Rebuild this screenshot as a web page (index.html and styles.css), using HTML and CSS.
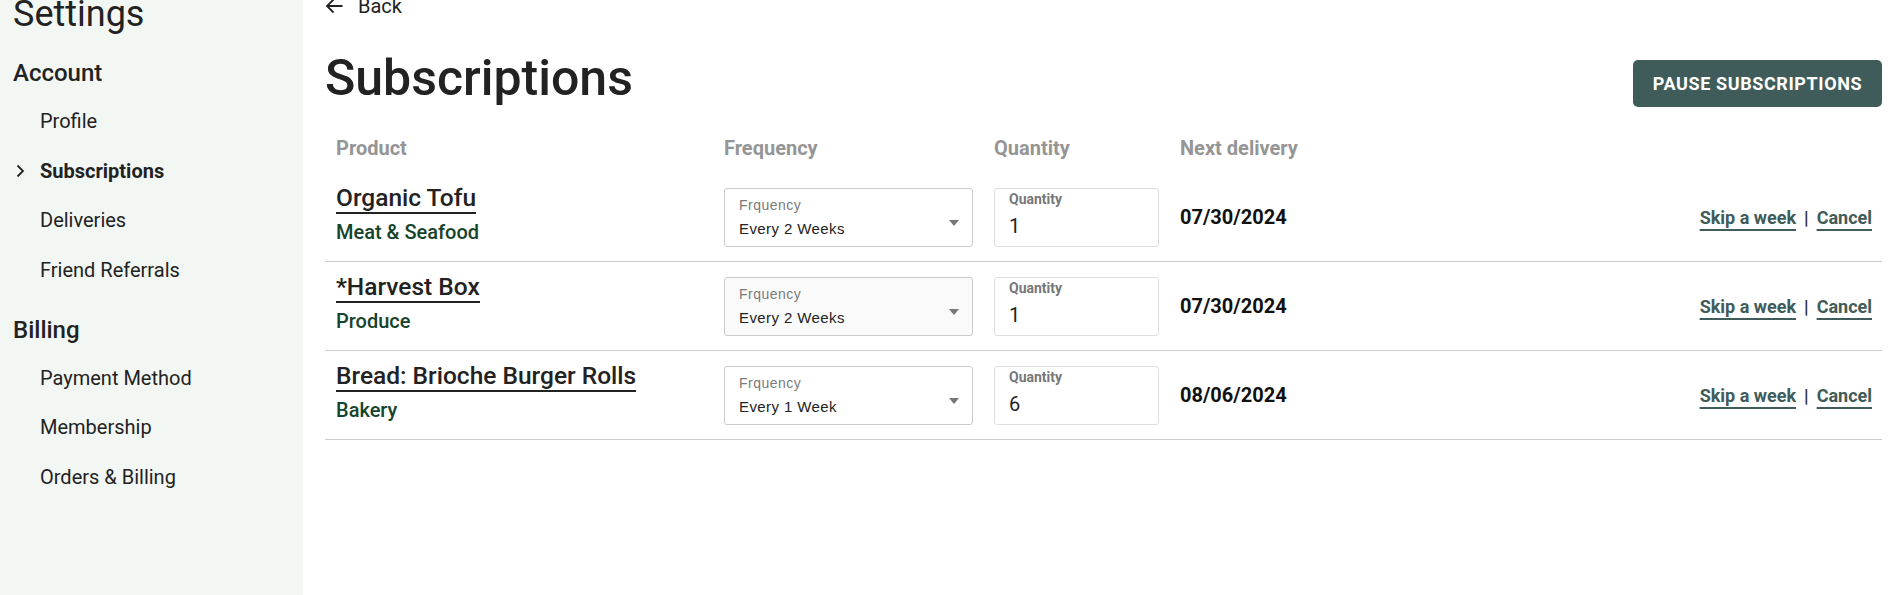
FILE: index.html
```html
<!DOCTYPE html>
<html lang="en">
<head>
<meta charset="utf-8">
<title>Subscriptions</title>
<link rel="stylesheet" href="styles.css">
</head>
<body>
<div class="layout">
  <aside class="sidebar">
    <h1 class="sidebar-title">Settings</h1>
    <section class="nav-section">
      <h2 class="nav-heading">Account</h2>
      <ul class="nav-list">
        <li class="nav-item"><span class="nav-marker"></span><a class="nav-link" href="#">Profile</a></li>
        <li class="nav-item is-active"><span class="nav-marker"><svg width="9" height="14" viewBox="0 0 9 14"><polyline points="1.5,1.5 7,7 1.5,12.5" fill="none" stroke="#222" stroke-width="1.8"/></svg></span><a class="nav-link" href="#">Subscriptions</a></li>
        <li class="nav-item"><span class="nav-marker"></span><a class="nav-link" href="#">Deliveries</a></li>
        <li class="nav-item"><span class="nav-marker"></span><a class="nav-link" href="#">Friend Referrals</a></li>
      </ul>
    </section>
    <section class="nav-section">
      <h2 class="nav-heading">Billing</h2>
      <ul class="nav-list">
        <li class="nav-item"><span class="nav-marker"></span><a class="nav-link" href="#">Payment Method</a></li>
        <li class="nav-item"><span class="nav-marker"></span><a class="nav-link" href="#">Membership</a></li>
        <li class="nav-item"><span class="nav-marker"></span><a class="nav-link" href="#">Orders &amp; Billing</a></li>
      </ul>
    </section>
  </aside>

  <main class="content">
    <a class="back-link" href="#">
      <svg width="18" height="16" viewBox="0 0 18 16"><path d="M17.5 8H2.2M8.5 1.5L2 8l6.5 6.5" fill="none" stroke="#222" stroke-width="1.8"/></svg>
      <span>Back</span>
    </a>

    <div class="title-row">
      <h1 class="page-title">Subscriptions</h1>
      <button class="pause-btn" type="button">Pause Subscriptions</button>
    </div>

    <div class="sub-table">
      <div class="sub-head">
        <div>Product</div>
        <div>Frequency</div>
        <div>Quantity</div>
        <div>Next delivery</div>
        <div></div>
      </div>

      <div class="sub-row">
        <div class="product">
          <a class="product-name" href="#">Organic Tofu</a>
          <span class="product-cat">Meat &amp; Seafood</span>
        </div>
        <div class="select">
          <div class="select-text">
            <span class="select-label">Frquency</span>
            <span class="select-value">Every 2 Weeks</span>
          </div>
          <span class="select-caret"></span>
        </div>
        <div class="qty">
          <span class="qty-label">Quantity</span>
          <span class="qty-value">1</span>
        </div>
        <div class="date">07/30/2024</div>
        <div class="actions"><a class="action-link" href="#">Skip a week</a><span class="action-sep">|</span><a class="action-link" href="#">Cancel</a></div>
      </div>

      <div class="sub-row">
        <div class="product">
          <a class="product-name" href="#">*Harvest Box</a>
          <span class="product-cat">Produce</span>
        </div>
        <div class="select is-hover">
          <div class="select-text">
            <span class="select-label">Frquency</span>
            <span class="select-value">Every 2 Weeks</span>
          </div>
          <span class="select-caret"></span>
        </div>
        <div class="qty">
          <span class="qty-label">Quantity</span>
          <span class="qty-value">1</span>
        </div>
        <div class="date">07/30/2024</div>
        <div class="actions"><a class="action-link" href="#">Skip a week</a><span class="action-sep">|</span><a class="action-link" href="#">Cancel</a></div>
      </div>

      <div class="sub-row">
        <div class="product">
          <a class="product-name" href="#">Bread: Brioche Burger Rolls</a>
          <span class="product-cat">Bakery</span>
        </div>
        <div class="select">
          <div class="select-text">
            <span class="select-label">Frquency</span>
            <span class="select-value">Every 1 Week</span>
          </div>
          <span class="select-caret"></span>
        </div>
        <div class="qty">
          <span class="qty-label">Quantity</span>
          <span class="qty-value">6</span>
        </div>
        <div class="date">08/06/2024</div>
        <div class="actions"><a class="action-link" href="#">Skip a week</a><span class="action-sep">|</span><a class="action-link" href="#">Cancel</a></div>
      </div>
    </div>
  </main>
</div>
</body>
</html>
```

FILE: styles.css
```css
* { box-sizing: border-box; }

html, body {
  margin: 0;
  padding: 0;
  background: #ffffff;
}

body {
  font-family: Roboto, "Noto Sans", Arial, sans-serif;
  color: #222222;
}

a { color: inherit; text-decoration: none; }

.layout {
  display: flex;
  min-height: 100vh;
}

/* ---------- Sidebar ---------- */
.sidebar {
  width: 303px;
  flex: 0 0 303px;
  background: #f3f7f4;
  padding-left: 13px;
}

.sidebar-title {
  margin: -7px 0 0 0;
  font-size: 36px;
  line-height: 42px;
  font-weight: 400;
  color: #222;
}

.nav-section { margin-top: 24px; }
.nav-section + .nav-section { margin-top: 34px; }

.nav-heading {
  margin: 0;
  font-size: 24px;
  line-height: 28px;
  font-weight: 500;
  color: #222;
}

.nav-list {
  list-style: none;
  margin: 22px 0 0 0;
  padding: 0;
  display: flex;
  flex-direction: column;
  gap: 25.5px;
}

.nav-item {
  display: flex;
  align-items: center;
  height: 24px;
}

.nav-marker {
  width: 27px;
  flex: 0 0 27px;
  display: flex;
  align-items: center;
  padding-left: 3px;
}

.nav-link {
  font-size: 20px;
  line-height: 24px;
  color: #222;
}

.nav-item.is-active .nav-link { font-weight: 700; }

/* ---------- Main ---------- */
.content {
  flex: 1;
  padding: 0 19px 0 22px;
}

.back-link {
  margin-top: -6px;
  display: flex;
  align-items: center;
  gap: 15px;
  height: 24px;
  font-size: 20px;
  line-height: 24px;
  color: #222;
}

.title-row {
  margin-top: 30px;
  display: flex;
  justify-content: space-between;
  align-items: flex-start;
}

.page-title {
  margin: 0;
  font-size: 50px;
  line-height: 60px;
  font-weight: 500;
  color: #222;
}

.pause-btn {
  margin-top: 12px;
  width: 249px;
  height: 47px;
  border: none;
  border-radius: 5px;
  background: #3f5c5a;
  color: #ffffff;
  font-family: Roboto, Arial, sans-serif;
  font-size: 18px;
  font-weight: 700;
  letter-spacing: 0.6px;
  text-transform: uppercase;
}

/* ---------- Table ---------- */
.sub-table { margin-top: 28px; }

.sub-head,
.sub-row {
  display: grid;
  grid-template-columns: 388px 270px 186px 1fr auto;
  padding: 0 10px 0 11px;
}

.sub-head {
  height: 24px;
  margin-bottom: 13px;
  font-size: 20px;
  line-height: 24px;
  font-weight: 700;
  color: #959595;
}

.sub-row {
  height: 89px;
  align-items: center;
  border-bottom: 1px solid #cccccc;
}

.product {
  display: flex;
  flex-direction: column;
  align-items: flex-start;
  gap: 6px;
  margin-bottom: 7px;
}

.product-name {
  font-size: 24.5px;
  line-height: 28px;
  font-weight: 500;
  color: #222;
  border-bottom: 2px solid #222;
}

.product-cat {
  font-size: 20px;
  line-height: 24px;
  font-weight: 500;
  color: #16432b;
}

.select {
  width: 249px;
  height: 59px;
  border: 1px solid #cbcbcb;
  border-radius: 3px;
  background: #ffffff;
  display: flex;
  align-items: flex-start;
  justify-content: space-between;
  padding: 8px 13px 0 14px;
  font-family: "Liberation Sans", Arial, sans-serif;
}

.select.is-hover { background: #fafafa; }

.select-text {
  display: flex;
  flex-direction: column;
  gap: 7px;
}

.select-label {
  font-size: 14px;
  line-height: 16px;
  letter-spacing: 0.5px;
  color: #7a7a7a;
}

.select-value {
  font-size: 15px;
  line-height: 18px;
  letter-spacing: 0.4px;
  color: #222;
}

.select-caret {
  margin-top: 23px;
  width: 0;
  height: 0;
  border-left: 5.5px solid transparent;
  border-right: 5.5px solid transparent;
  border-top: 6px solid #777777;
}

.qty {
  width: 165px;
  height: 59px;
  border: 1px solid #dedede;
  border-radius: 3px;
  display: flex;
  flex-direction: column;
  gap: 7px;
  padding: 2px 14px 0 14px;
}

.qty-label {
  font-size: 14px;
  line-height: 16px;
  font-weight: 700;
  color: #777777;
}

.qty-value {
  font-size: 20px;
  line-height: 24px;
  color: #222;
}

.date {
  font-size: 20px;
  font-weight: 700;
  color: #111;
}

.actions {
  display: flex;
  align-items: baseline;
  font-size: 18px;
  font-weight: 700;
}

.action-link {
  color: #3f5c5a;
  text-decoration: underline;
  text-decoration-thickness: 2px;
  text-underline-offset: 5px;
}

.action-sep {
  margin: 0 8px;
  color: #333;
}
```
